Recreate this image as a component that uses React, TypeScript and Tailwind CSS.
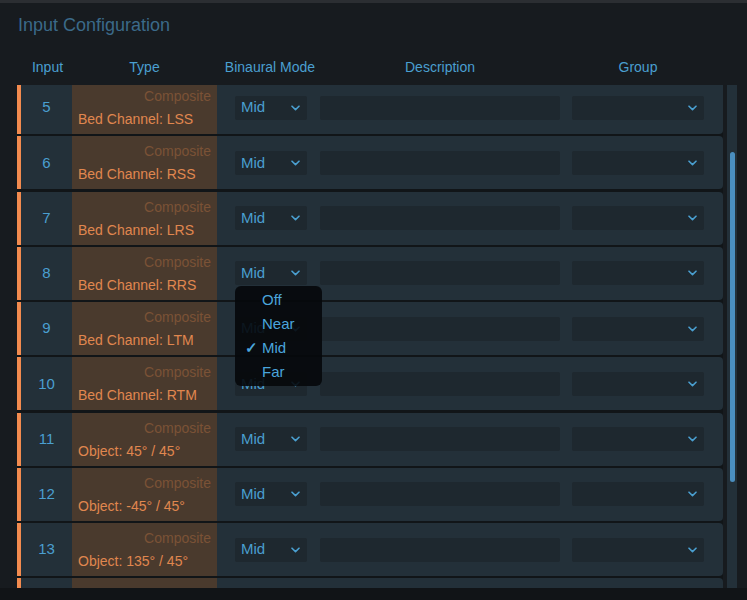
import React from "react"

type Row = {
  input: number
  label: string
}

const ROWS: Row[] = [
  { input: 5, label: "Bed Channel: LSS" },
  { input: 6, label: "Bed Channel: RSS" },
  { input: 7, label: "Bed Channel: LRS" },
  { input: 8, label: "Bed Channel: RRS" },
  { input: 9, label: "Bed Channel: LTM" },
  { input: 10, label: "Bed Channel: RTM" },
  { input: 11, label: "Object: 45° / 45°" },
  { input: 12, label: "Object: -45° / 45°" },
  { input: 13, label: "Object: 135° / 45°" },
]

const MODES = ["Off", "Near", "Mid", "Far"]

function Chevron() {
  return (
    <svg width="9" height="6" viewBox="0 0 9 6" fill="none" className="shrink-0">
      <path d="M1 1.2 L4.5 4.6 L8 1.2" stroke="#4a9fd0" strokeWidth="1.6" strokeLinecap="round" strokeLinejoin="round" />
    </svg>
  )
}

function InputRow({ row }: { row: Row }) {
  return (
    <div className="flex h-[53px] shrink-0 items-stretch overflow-hidden rounded-r-[4px] bg-[#233039]">
      <div className="w-[4px] bg-[#f38b4f]" />
      <div className="flex w-[51px] items-center justify-center text-[15px] text-[#4a9fd0]">{row.input}</div>
      <div className="flex w-[145px] flex-col justify-center bg-[#4a3a2d] px-[6px]">
        <div className="text-right text-[14px] leading-[18px] text-[#7b5236]">Composite</div>
        <div className="mt-[5px] whitespace-nowrap text-[14px] leading-[18px] text-[#e0874f]">{row.label}</div>
      </div>
      <div className="ml-[18px] flex items-center">
        <div className="flex h-[24px] w-[72px] items-center justify-between rounded-[2px] bg-[#1e282f] pl-[6px] pr-[7px]">
          <span className="text-[15px] text-[#4a9fd0]">Mid</span>
          <Chevron />
        </div>
      </div>
      <div className="ml-[13px] flex items-center">
        <div className="h-[24px] w-[240px] rounded-[2px] bg-[#1e282f]" />
      </div>
      <div className="ml-[12px] flex items-center">
        <div className="flex h-[24px] w-[132px] items-center justify-end rounded-[2px] bg-[#1e282f] pr-[7px]">
          <Chevron />
        </div>
      </div>
    </div>
  )
}

// next row, scrolled mostly out of view: only its top edge shows
function PartialRow() {
  return (
    <div className="flex h-[53px] shrink-0 items-stretch overflow-hidden rounded-r-[4px] bg-[#233039]">
      <div className="w-[4px] bg-[#f38b4f]" />
      <div className="w-[51px]" />
      <div className="w-[145px] bg-[#4a3a2d]" />
    </div>
  )
}

export default function App() {
  return (
    <div
      className="relative flex h-[600px] w-[747px] flex-col overflow-hidden bg-[#171b1f]"
      style={{ fontFamily: "'Liberation Sans', Arial, sans-serif" }}
    >
      <div className="h-[3px] bg-[#2b2e32]" />
      <h1 className="ml-[18px] mt-[10px] text-[18px] leading-[24px] text-[#3b6a89]">Input Configuration</h1>

      <div className="mt-[20px] flex h-[20px] items-center pl-[21px] text-[14px] leading-[20px] text-[#4a9fd0]">
        <div className="w-[51px] pl-[2px] text-center">Input</div>
        <div className="w-[145px] text-center">Type</div>
        <div className="w-[103px] pl-[3px] text-center">Binaural Mode</div>
        <div className="w-[240px] text-center">Description</div>
        <div className="ml-[12px] w-[132px] text-center">Group</div>
      </div>

      <div className="mt-[8px] flex h-[503px]">
        <div className="ml-[17px] h-full w-[706px] overflow-hidden bg-[#111518]">
          <div className="-mt-[4px] flex flex-col gap-[2.25px]">
            {ROWS.map((row) => (
              <InputRow key={row.input} row={row} />
            ))}
            <PartialRow />
          </div>
        </div>
        <div className="ml-[4px] flex h-full w-[10px] justify-center bg-[#233039] pt-[67px]">
          <div className="h-[330px] w-[5px] rounded-full bg-[#4a8ebf]" />
        </div>
      </div>
      <div className="flex-1 bg-[#111417]" />

      <div className="absolute left-[235px] top-[286px] flex h-[100px] w-[87px] flex-col justify-center rounded-[6px] bg-[#05080b]/90 py-[2px] text-[15px] text-[#4aa5dc]">
        {MODES.map((mode) => (
          <div key={mode} className="flex h-[24px] items-center">
            <span className="w-[27px] pl-[10px] text-[15px] font-bold">{mode === "Mid" ? "✓" : ""}</span>
            <span>{mode}</span>
          </div>
        ))}
      </div>
    </div>
  )
}
